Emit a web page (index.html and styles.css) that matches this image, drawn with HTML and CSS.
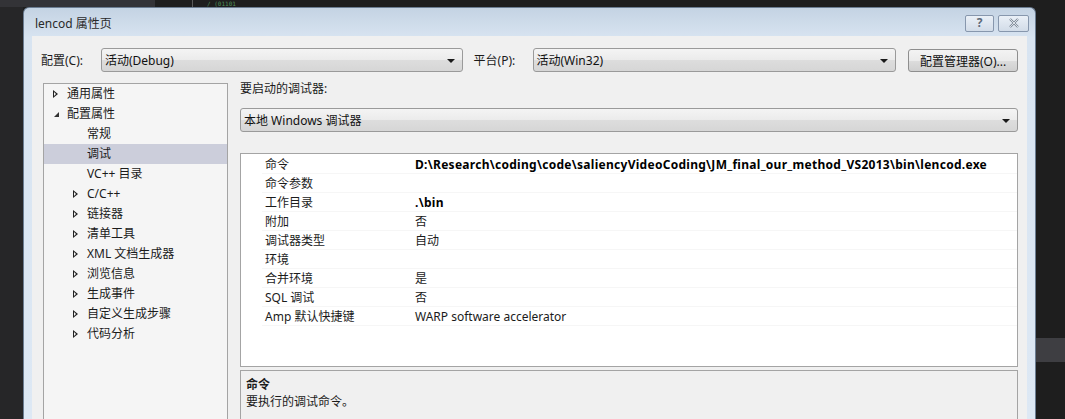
FILE: index.html
```html
<!DOCTYPE html>
<html>
<head>
<meta charset="utf-8">
<link rel="stylesheet" href="styles.css">
</head>
<body>
<div class="desktop">
  <div class="topstrip">
    <div class="ts-a"></div>
    <div class="ts-b"></div>
    <div class="ts-c"><span class="code">/ (01101</span></div>
  </div>
  <div class="row">
    <div class="left-edge"></div>
    <div class="window">
      <div class="titlebar">
        <span class="title">lencod 属性页</span>
        <div class="tb-buttons">
          <div class="tb-btn help">?</div>
          <div class="tb-btn close">
            <svg width="12" height="10" viewBox="0 0 12 10"><path d="M2 1 L10 9 M10 1 L2 9" stroke="#7d8896" stroke-width="2.2" fill="none"/><path d="M2 1 L10 9 M10 1 L2 9" stroke="#f4f7fa" stroke-width="0.8" fill="none"/></svg>
          </div>
        </div>
      </div>
      <div class="client">
        <div class="config-row">
          <span class="lbl lbl-config">配置(C):</span>
          <div class="combo combo-config"><span>活动(Debug)</span><i class="arrow"></i></div>
          <span class="lbl lbl-platform">平台(P):</span>
          <div class="combo combo-platform"><span>活动(Win32)</span><i class="arrow"></i></div>
          <div class="button">配置管理器(O)...</div>
        </div>
        <div class="main">
          <div class="tree">
            <div class="node l0"><i class="tri"></i>通用属性</div>
            <div class="node l0"><i class="tri open"></i>配置属性</div>
            <div class="node l1 leaf">常规</div>
            <div class="node l1 leaf sel">调试</div>
            <div class="node l1 leaf">VC++ 目录</div>
            <div class="node l1"><i class="tri"></i>C/C++</div>
            <div class="node l1"><i class="tri"></i>链接器</div>
            <div class="node l1"><i class="tri"></i>清单工具</div>
            <div class="node l1"><i class="tri"></i>XML 文档生成器</div>
            <div class="node l1"><i class="tri"></i>浏览信息</div>
            <div class="node l1"><i class="tri"></i>生成事件</div>
            <div class="node l1"><i class="tri"></i>自定义生成步骤</div>
            <div class="node l1"><i class="tri"></i>代码分析</div>
          </div>
          <div class="panel">
            <div class="panel-label">要启动的调试器:</div>
            <div class="combo combo-debugger"><span>本地 Windows 调试器</span><i class="arrow"></i></div>
            <div class="grid">
              <div class="prop"><span class="pn">命令</span><span class="pv b">D:\Research\coding\code\saliencyVideoCoding\JM_final_our_method_VS2013\bin\lencod.exe</span></div>
              <div class="prop"><span class="pn">命令参数</span><span class="pv"></span></div>
              <div class="prop"><span class="pn">工作目录</span><span class="pv b">.\bin</span></div>
              <div class="prop"><span class="pn">附加</span><span class="pv">否</span></div>
              <div class="prop"><span class="pn">调试器类型</span><span class="pv">自动</span></div>
              <div class="prop"><span class="pn">环境</span><span class="pv"></span></div>
              <div class="prop"><span class="pn">合并环境</span><span class="pv">是</span></div>
              <div class="prop"><span class="pn">SQL 调试</span><span class="pv">否</span></div>
              <div class="prop"><span class="pn">Amp 默认快捷键</span><span class="pv">WARP software accelerator</span></div>
            </div>
            <div class="desc">
              <div class="desc-title">命令</div>
              <div class="desc-text">要执行的调试命令。</div>
            </div>
          </div>
        </div>
      </div>
    </div>
    <div class="right-edge">
      <div class="re-top"></div>
      <div class="re-band"></div>
      <div class="re-bottom"></div>
    </div>
  </div>
</div>
</body>
</html>
```

FILE: styles.css
```css
* { box-sizing: border-box; }
html, body { margin: 0; padding: 0; }
body {
  width: 1065px;
  height: 419px;
  overflow: hidden;
  background: #1e1e1e;
  font-family: "Noto Sans", "Noto Sans CJK SC", sans-serif;
  font-size: 12px;
  color: #1b1b1b;
}
.desktop { display: flex; flex-direction: column; height: 419px; }
.topstrip { display: flex; height: 7px; overflow: hidden; flex: none; }
.ts-a { width: 155px; background: #333337; }
.ts-b { width: 38px; background: #1e1e1e; border-right: 1px solid #5a5a5a; }
.ts-c { flex: 1; background: #1e1e1e; display: flex; align-items: center; }
.ts-c .code { display: block; margin: 0 0 0 14px; color: #4e8f5a; font-family: "DejaVu Sans Mono", monospace; font-size: 6px; line-height: 7px; }
.row { display: flex; flex: 1; min-height: 0; }
.left-edge { width: 23px; background: #262628; flex: none; }
.right-edge { flex: 1; display: flex; flex-direction: column; background: #1e1e1e; }
.re-top { height: 331px; }
.re-band { height: 24px; background: #3e3e42; }
.re-bottom { flex: 1; }

.window {
  width: 1013px;
  flex: none;
  background: linear-gradient(#c4d3e3, #d8e4f1 30px, #dde8f4);
  border-radius: 6px 6px 0 0;
  border: 1px solid #6b7d92;
  border-bottom: none;
  padding: 0 8px;
  display: flex;
  flex-direction: column;
}
.titlebar {
  height: 28px;
  display: flex;
  align-items: center;
  justify-content: space-between;
  flex: none;
}
.title { margin-left: 3px; margin-top: 2px; color: #2a2a2a; font-size: 12px; }
.tb-buttons { display: flex; gap: 4px; margin-right: -2px; margin-top: 2px; }
.tb-btn {
  height: 17px;
  border: 1px solid #8797ad;
  border-radius: 2px;
  background: linear-gradient(#eaf0f7, #d2dce8);
  display: flex;
  align-items: center;
  justify-content: center;
  color: #5e6a78;
  font-size: 12px;
  font-weight: bold;
  line-height: 1;
}
.tb-btn.help { width: 29px; }
.tb-btn.close { width: 31px; }

.client {
  flex: 1;
  background: #f0f0f0;
  padding: 12px 9px 0 9px;
  display: flex;
  flex-direction: column;
  min-height: 0;
}
.config-row { display: flex; align-items: center; height: 24px; }
.lbl { color: #1b1b1b; }
.lbl-config { width: 60px; }
.lbl-platform { margin-left: 11px; width: 59px; }
.combo {
  height: 24px;
  border: 1px solid #9a9a9a;
  border-radius: 3px;
  background: linear-gradient(#f4f4f4, #ebebeb 50%, #dddddd 51%, #d6d6d6);
  display: flex;
  align-items: center;
  justify-content: space-between;
  padding: 0 7px 0 3px;
}
.combo span { color: #111; }
.arrow {
  width: 0; height: 0;
  border-left: 4px solid transparent;
  border-right: 4px solid transparent;
  border-top: 4px solid #1a1a1a;
  margin-top: 1px;
}
.combo-config { width: 362px; }
.combo-platform { width: 364px; }
.button {
  margin-left: 12px;
  width: 110px;
  height: 23px;
  border: 1px solid #8e8e8e;
  border-radius: 3px;
  background: linear-gradient(#f3f3f3, #ebebeb 50%, #dddddd 51%, #cfcfcf);
  display: flex;
  align-items: center;
  justify-content: center;
  color: #111;
  margin-top: 1px;
}

.main { display: flex; margin-top: 11px; flex: 1; min-height: 0; }
.tree {
  margin-left: 2px;
  width: 185px;
  border: 1px solid #a4a4a4;
  border-bottom: none;
  background: #f5f5f5;
  padding-top: 0;
  flex: none;
}
.node { height: 20px; line-height: 20px; display: flex; align-items: center; white-space: nowrap; color: #1b1b1b; }
.node.l0 { padding-left: 9px; }
.node.l1 { padding-left: 29px; }
.node.leaf { padding-left: 43px; }
.node.sel { background: #cccedb; }
.tri {
  width: 7px; height: 9px;
  margin-right: 7px;
  position: relative;
  flex: none;
}
.tri::before {
  content: "";
  position: absolute; left: 0; top: 0;
  border-top: 4.5px solid transparent;
  border-bottom: 4.5px solid transparent;
  border-left: 5px solid #222;
}
.tri::after {
  content: "";
  position: absolute; left: 1px; top: 2px;
  border-top: 2.5px solid transparent;
  border-bottom: 2.5px solid transparent;
  border-left: 2.8px solid #f5f5f5;
}
.tri.open::before {
  border: none;
  left: 1px; top: 2px;
  width: 0; height: 0;
  border-left: 5px solid transparent;
  border-bottom: 5px solid #333;
}
.tri.open::after { display: none; }

.panel { margin-left: 12px; width: 778px; display: flex; flex-direction: column; }
.panel-label { height: 14px; line-height: 12px; margin-top: 0; }
.combo-debugger { margin-top: 11px; width: 778px; }
.grid {
  margin-top: 21px;
  height: 214px;
  border: 1px solid #a4a4a4;
  background: #fff;
  padding-top: 1px;
  flex: none;
}
.prop { display: flex; height: 19px; align-items: center; margin-left: 21px; border-bottom: 1px solid #f6f6f6; }
.pn { width: 153px; padding-left: 3px; color: #1b1b1b; }
.pv { flex: 1; color: #1b1b1b; white-space: nowrap; }
.pv.b { font-weight: bold; color: #000; letter-spacing: 0.28px; }
.desc {
  margin-top: 3px;
  flex: 1;
  border: 1px solid #a4a4a4;
  border-bottom: none;
  background: #f0f0f0;
  padding: 6px 5px 0 5px;
}
.desc-title { font-weight: bold; line-height: 16px; }
.desc-text { line-height: 17px; }
```
